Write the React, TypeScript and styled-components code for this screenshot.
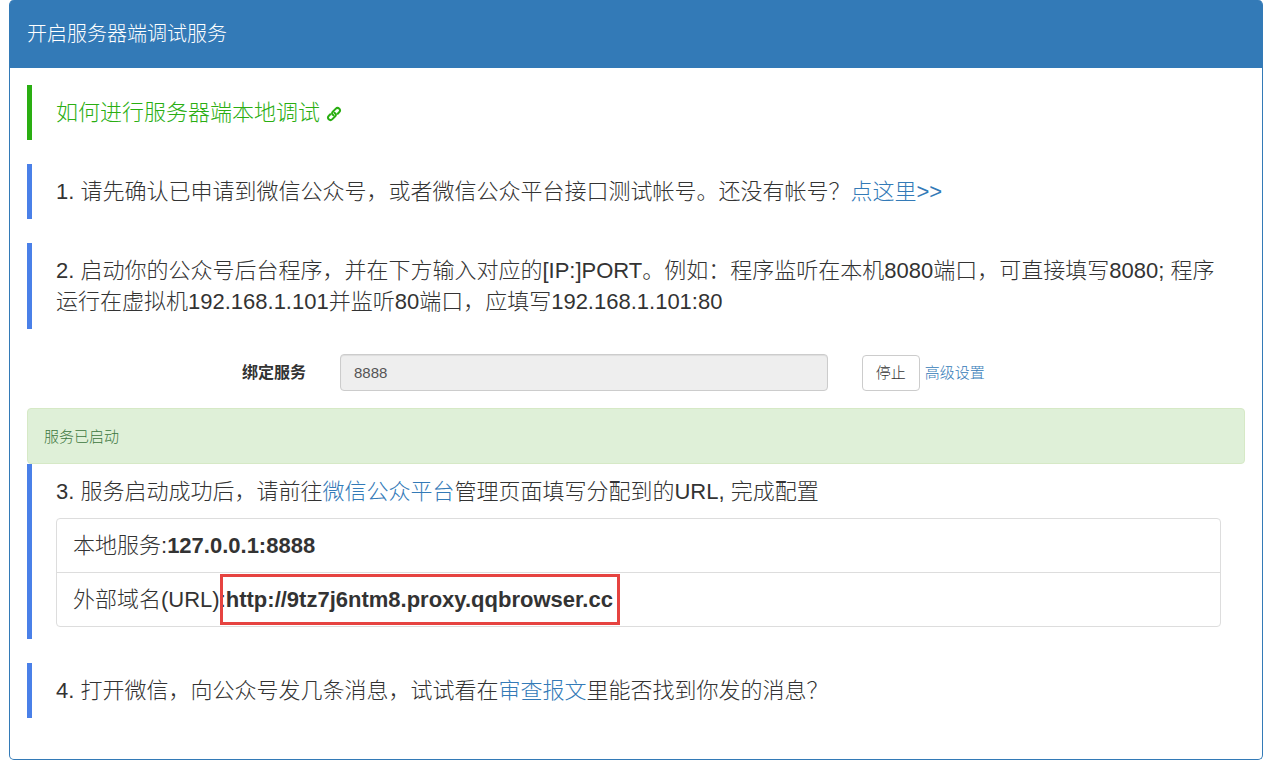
import React from "react";
import styled, { createGlobalStyle } from "styled-components";

const GlobalStyle = createGlobalStyle`
  *, *::before, *::after { box-sizing: border-box; }
  body {
    margin: 0 7px 0 9px;
    background: #fff;
    color: #333;
    font: 300 15px/21px "Liberation Sans", "Noto Sans CJK SC", sans-serif;
  }
`;

const Panel = styled.main`
  border: 1px solid #337ab7;
  border-top: 0;
  border-radius: 5px;
`;

const PanelHeader = styled.header`
  padding: 20px 17px;
  border-radius: 4px 4px 0 0;
  background: #337ab7;
  color: #fff;
`;

const PanelTitle = styled.h1`
  margin: 0;
  font-size: 20px;
  line-height: 28px;
  font-weight: 300;
`;

const PanelBody = styled.div`
  padding: 17px;
`;

const Step = styled.section<{ $tone?: "green" | "blue" }>`
  margin-bottom: 24px;
  padding: 12px 24px;
  border-left: 5px solid ${({ $tone }) => ($tone === "green" ? "#2aae12" : "#4a80e8")};
  font-size: 22px;
  line-height: 31px;
`;

const StepText = styled.p`
  margin: 0;
`;

const Link = styled.a`
  color: #337ab7;
  text-decoration: none;
`;

const GuideLink = styled(Link)`
  color: #2aae12;
`;

const LinkIcon = styled.svg`
  margin-left: 6px;
  vertical-align: -2px;
`;

const BindForm = styled.form`
  display: grid;
  grid-template-columns: 3fr 5fr 4fr;
  margin: 25px -17px 17px;
`;

const Cell = styled.div`
  display: flex;
  align-items: center;
  gap: 5px;
  min-width: 0;
  padding: 0 17px;
`;

const LabelCell = styled(Cell)`
  justify-content: flex-end;
`;

const Label = styled.label`
  font-size: 16px;
  font-weight: 700;
`;

const PortInput = styled.input`
  width: 100%;
  height: 37px;
  padding: 6px 13px;
  border: 1px solid #ccc;
  border-radius: 4px;
  background: #eee;
  box-shadow: inset 0 1px 1px rgba(0, 0, 0, 0.075);
  color: #555;
  font: inherit;
`;

const StopButton = styled.button`
  height: 36px;
  padding: 0 13px;
  border: 1px solid #ccc;
  border-radius: 4px;
  background: #fff;
  color: #333;
  font: inherit;
`;

const Alert = styled.div`
  padding: 17px 16px 16px;
  border: 1px solid #d6e9c6;
  border-radius: 4px;
  background: #dff0d8;
  color: #3c763d;
`;

const AddressList = styled.ul`
  margin: 11px 0 0;
  padding: 0;
  border: 1px solid #ddd;
  border-radius: 4px;
  list-style: none;
`;

const AddressItem = styled.li`
  padding: 11px 16px;

  & + & {
    border-top: 1px solid #ddd;
  }
`;

const Address = styled.strong<{ $marked?: boolean }>`
  display: inline-block;
  position: relative;
  font-weight: 700;
  vertical-align: top;

  &::after {
    content: "";
    display: ${({ $marked }) => ($marked ? "block" : "none")};
    position: absolute;
    inset: -10px -7px -10px -6px;
    border: 3px solid #e64340;
  }
`;

export default function App() {
  return (
    <>
      <GlobalStyle />
      <Panel>
        <PanelHeader>
          <PanelTitle>开启服务器端调试服务</PanelTitle>
        </PanelHeader>
        <PanelBody>
          <Step $tone="green">
            <StepText>
              <GuideLink href="#guide">
                如何进行服务器端本地调试
                <LinkIcon width="16" height="16" viewBox="0 0 16 16" fill="none" stroke="currentColor" strokeWidth="2" strokeLinecap="round" aria-hidden="true">
                  <path d="M6.2 8.2 4.9 6.9a1.6 1.6 0 0 1 0-2.3" stroke="none" />
                  <path d="M7.4 9.2C5.8 8.400 5.700 6.800 6.800 5.700L9.600 2.900C10.800 1.700 12.300 1.800 13.300 2.700C14.200 3.700 14.200 5.200 13.100 6.300L11.700 7.700" />
                  <path d="M8.600 6.800C10.200 7.600 10.300 9.200 9.200 10.300L6.400 13.100C5.200 14.300 3.700 14.200 2.700 13.300C1.800 12.300 1.800 10.800 2.900 9.700L4.300 8.300" />
                </LinkIcon>
              </GuideLink>
            </StepText>
          </Step>
          <Step>
            <StepText>
              1. 请先确认已申请到微信公众号，或者微信公众平台接口测试帐号。还没有帐号？
              <Link href="#apply">点这里&gt;&gt;</Link>
            </StepText>
          </Step>
          <Step>
            <StepText>
              2. 启动你的公众号后台程序，并在下方输入对应的[IP:]PORT。例如：程序监听在本机8080端口，可直接填写8080; 程序运行在虚拟机192.168.1.101并监听80端口，应填写192.168.1.101:80
            </StepText>
          </Step>
          <BindForm>
            <LabelCell>
              <Label htmlFor="port">绑定服务</Label>
            </LabelCell>
            <Cell>
              <PortInput id="port" type="text" defaultValue="8888" disabled />
            </Cell>
            <Cell>
              <StopButton type="button">停止</StopButton>
              <Link href="#advanced">高级设置</Link>
            </Cell>
          </BindForm>
          <Alert role="status">服务已启动</Alert>
          <Step>
            <StepText>
              3. 服务启动成功后，请前往<Link href="#platform">微信公众平台</Link>管理页面填写分配到的URL, 完成配置
            </StepText>
            <AddressList>
              <AddressItem>
                本地服务:<Address>127.0.0.1:8888</Address>
              </AddressItem>
              <AddressItem>
                外部域名(URL):<Address $marked>http://9tz7j6ntm8.proxy.qqbrowser.cc</Address>
              </AddressItem>
            </AddressList>
          </Step>
          <Step>
            <StepText>
              4. 打开微信，向公众号发几条消息，试试看在<Link href="#inspect">审查报文</Link>里能否找到你发的消息？
            </StepText>
          </Step>
        </PanelBody>
      </Panel>
    </>
  );
}
